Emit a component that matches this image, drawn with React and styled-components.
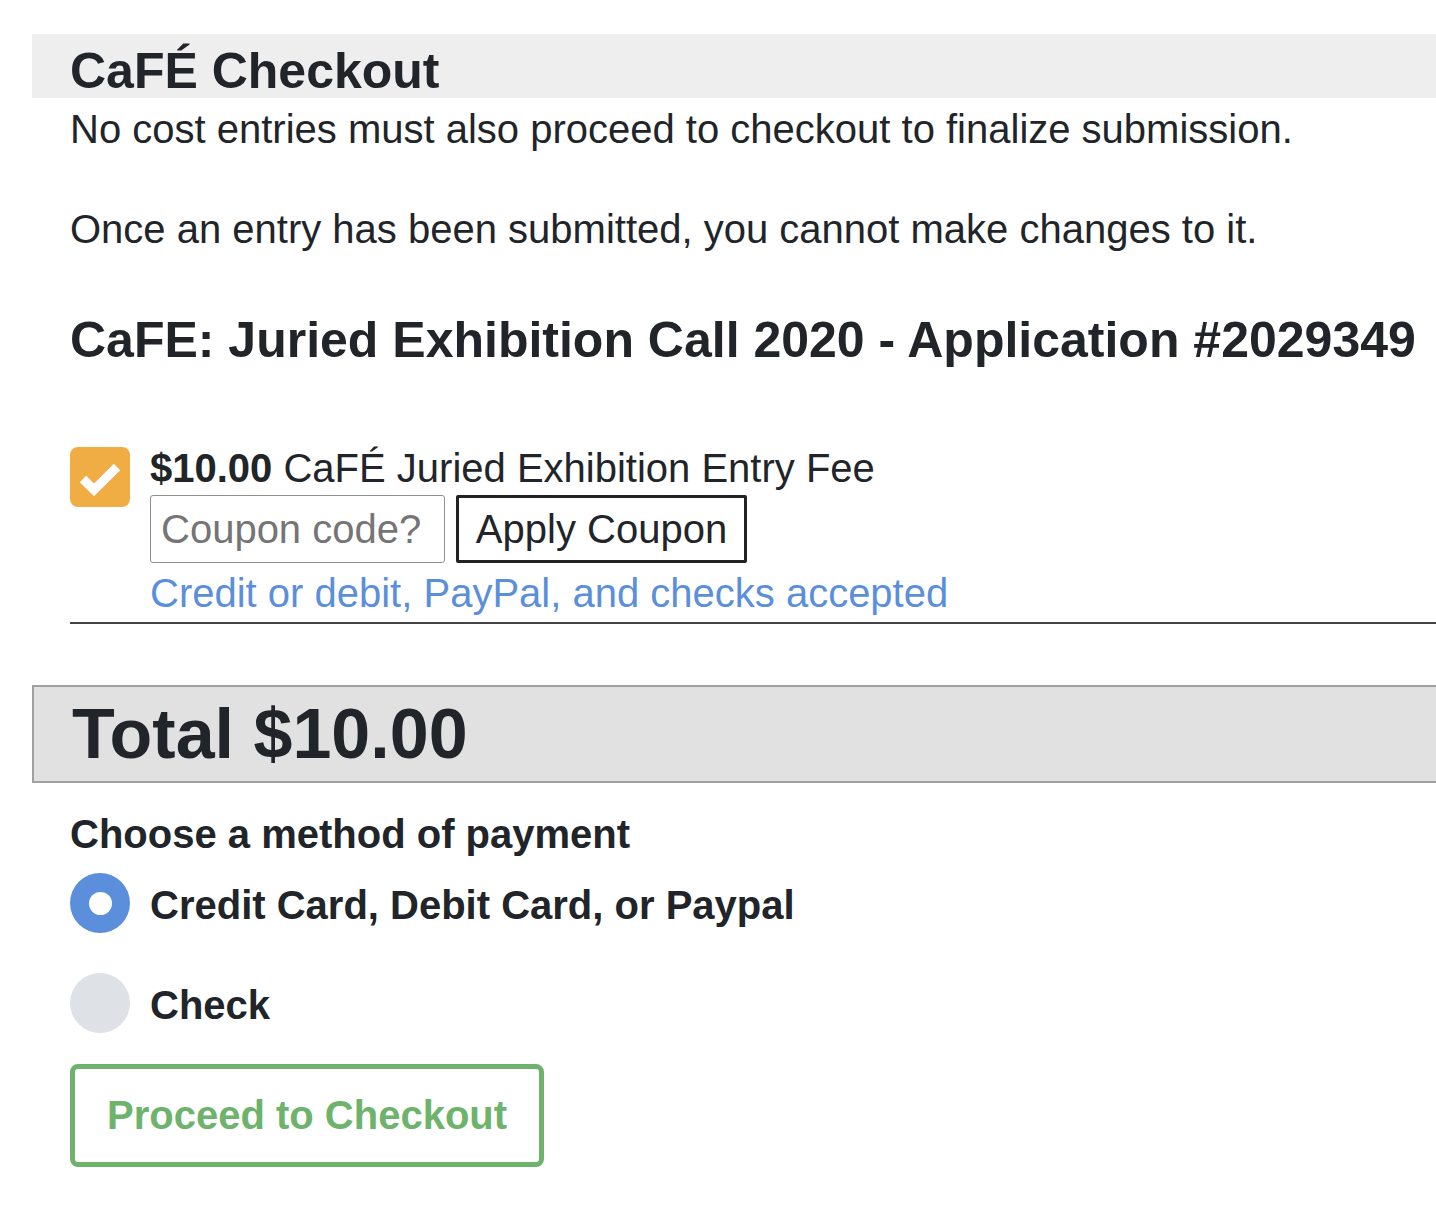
import styled, { createGlobalStyle } from "styled-components";

const GlobalStyle = createGlobalStyle`
  body {
    margin: 0;
    background: #fff;
    color: #212529;
    font-family: "Liberation Sans", Arial, sans-serif;
  }
`;

const Page = styled.main`
  padding: 34px 0 60px 32px;
  overflow: hidden;
`;

const TitleBar = styled.h1`
  margin: 0;
  height: 64px;
  box-sizing: border-box;
  padding: 12px 0 2px 38px;
  background: #eeeeee;
  font-size: 50px;
  line-height: 50px;
  font-weight: 700;
`;

const Section = styled.section`
  padding-left: 38px;
  display: flex;
  flex-direction: column;
`;

const Note = styled.p`
  margin: ${(p) => p.$top || 0}px 0 0;
  font-size: 40px;
  line-height: 50px;
`;

const AppTitle = styled.h2`
  margin: 56px 0 0;
  font-size: 50px;
  line-height: 60px;
  font-weight: 700;
`;

const FeeRow = styled.div`
  display: flex;
  gap: 20px;
  margin-top: 75px;
`;

const CheckBox = styled.span`
  flex: none;
  width: 60px;
  height: 60px;
  margin-top: 2px;
  border-radius: 8px;
  background: #f0ad43;
  display: flex;
  align-items: center;
  justify-content: center;
`;

const FeeBody = styled.div`
  display: flex;
  flex-direction: column;
`;

const FeeLine = styled.div`
  font-size: 40px;
  line-height: 46px;

  b {
    font-weight: 700;
  }
`;

const CouponRow = styled.form`
  display: flex;
  gap: 11px;
  margin-top: 4px;
`;

const CouponInput = styled.input`
  box-sizing: border-box;
  width: 295px;
  height: 68px;
  padding: 0 10px;
  border: 1px solid #8f8f8f;
  border-radius: 3px;
  font-family: inherit;
  font-size: 40px;
  color: #212529;

  &::placeholder {
    color: #757575;
  }
`;

const CouponButton = styled.button`
  box-sizing: border-box;
  width: 291px;
  height: 68px;
  padding: 0;
  border: 3px solid #222;
  border-radius: 2px;
  background: #fff;
  font-family: inherit;
  font-size: 40px;
  color: #212529;
`;

const PayNote = styled.a`
  margin-top: 7px;
  font-size: 40px;
  line-height: 46px;
  color: #5b8fdb;
  text-decoration: none;
`;

const Rule = styled.hr`
  margin: 6px 0 0;
  border: 0;
  border-top: 2px solid #444;
`;

const TotalBox = styled.div`
  margin-top: 61px;
  height: 98px;
  box-sizing: border-box;
  padding-left: 38px;
  border: 2px solid #a0a0a0;
  border-right: 0;
  background: #e1e1e1;
  font-size: 70px;
  line-height: 94px;
  font-weight: 700;
`;

const MethodTitle = styled.h3`
  margin: 28px 0 0;
  font-size: 40px;
  line-height: 46px;
  font-weight: 700;
`;

const MethodRow = styled.label`
  display: flex;
  gap: 20px;
  margin-top: ${(p) => p.$top}px;
`;

const Radio = styled.span`
  flex: none;
  width: 60px;
  height: 60px;
  border-radius: 50%;
  background: ${(p) => (p.$checked ? "#5b8fdb" : "#dee2e6")};
  display: flex;
  align-items: center;
  justify-content: center;

  &::after {
    content: "";
    display: ${(p) => (p.$checked ? "block" : "none")};
    width: 23px;
    height: 23px;
    border-radius: 50%;
    background: #fff;
  }
`;

const MethodName = styled.span`
  margin-top: 9px;
  font-size: 40px;
  line-height: 46px;
  font-weight: 700;
`;

const CheckoutButton = styled.button`
  align-self: flex-start;
  margin-top: 31px;
  padding: 23px 32px 24px;
  border: 5px solid #6db36b;
  border-radius: 8px;
  background: #fff;
  font-family: inherit;
  font-size: 40px;
  line-height: 46px;
  font-weight: 700;
  color: #6db36b;
`;

const methods = [
  { label: "Credit Card, Debit Card, or Paypal", checked: true, top: 16 },
  { label: "Check", checked: false, top: 40 },
];

const App = () => {
  return (
    <Page>
      <GlobalStyle />
      <TitleBar>CaFÉ Checkout</TitleBar>
      <Section>
        <Note $top={6}>No cost entries must also proceed to checkout to finalize submission.</Note>
        <Note $top={50}>Once an entry has been submitted, you cannot make changes to it.</Note>
        <AppTitle>CaFE: Juried Exhibition Call 2020 - Application #2029349</AppTitle>

        <FeeRow>
          <CheckBox>
            <svg width="60" height="60" viewBox="0 0 60 60">
              <polyline
                points="13,32 24,43 47,20"
                fill="none"
                stroke="#fff"
                strokeWidth="9"
                strokeLinejoin="miter"
              />
            </svg>
          </CheckBox>
          <FeeBody>
            <FeeLine>
              <b>$10.00</b> CaFÉ Juried Exhibition Entry Fee
            </FeeLine>
            <CouponRow onSubmit={(e) => e.preventDefault()}>
              <CouponInput type="text" placeholder="Coupon code?" />
              <CouponButton type="submit">Apply Coupon</CouponButton>
            </CouponRow>
            <PayNote href="#">Credit or debit, PayPal, and checks accepted</PayNote>
          </FeeBody>
        </FeeRow>
        <Rule />
      </Section>

      <TotalBox>Total $10.00</TotalBox>

      <Section>
        <MethodTitle>Choose a method of payment</MethodTitle>
        {methods.map((m) => (
          <MethodRow key={m.label} $top={m.top}>
            <Radio $checked={m.checked} />
            <MethodName>{m.label}</MethodName>
          </MethodRow>
        ))}
        <CheckoutButton type="button">Proceed to Checkout</CheckoutButton>
      </Section>
    </Page>
  );
};

export default App;
